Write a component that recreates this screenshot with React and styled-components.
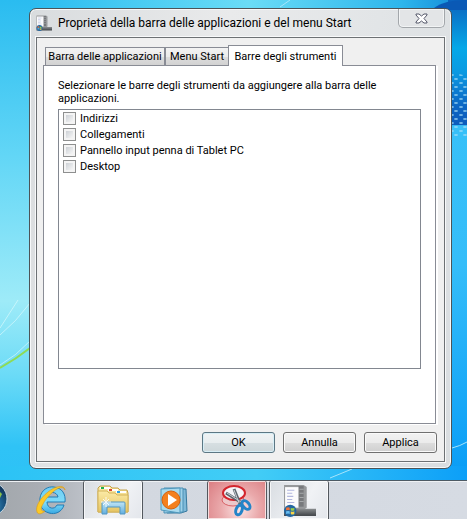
import React from 'react';
import styled, { createGlobalStyle } from 'styled-components';

const GlobalStyle = createGlobalStyle`
  * {
    box-sizing: border-box;
  }
  body {
    margin: 0;
    background: #35bdf2;
    font-family: Roboto, "Noto Sans", sans-serif;
    font-size: 11px;
    line-height: 13px;
    color: #000;
  }
  button {
    font: inherit;
    color: inherit;
  }
`;

const Screen = styled.div`
  position: relative;
  display: flex;
  flex-direction: column;
  min-height: 100vh;
  overflow: hidden;
`;

const WallpaperSvg = styled.svg`
  position: absolute;
  inset: 0;
  width: 100%;
  height: 100%;
  z-index: -1;
`;

const Desktop = styled.main`
  flex: 1;
  display: flex;
  padding: 8px 15px 11px 29px;
`;

const Window = styled.section`
  flex: 1;
  display: flex;
  flex-direction: column;
  min-width: 0;
  padding: 0 6px 6px;
  border: 1px solid #4c5458;
  border-radius: 7px;
  background: linear-gradient(100deg, #d9dcde 0, #e9eaeb 40%, #e2e5e7 70%, #d9dde0 100%);
  box-shadow: inset 0 0 0 1px #f6f8f9;
`;

const TitleBar = styled.header`
  display: flex;
  align-items: center;
  height: 28px;
  gap: 6px;
`;

const Title = styled.h1`
  flex: 1;
  margin: 0;
  font-size: 12px;
  font-weight: 400;
  line-height: 16px;
  white-space: nowrap;
`;

const CloseButton = styled.button`
  display: flex;
  align-items: center;
  justify-content: center;
  align-self: flex-start;
  width: 47px;
  height: 19px;
  padding: 0;
  border: 1px solid #a3a7ab;
  border-top: 0;
  border-radius: 0 0 5px 5px;
  background: #e3e5e7;
  box-shadow: inset 0 0 0 1px #f2f4f5;
`;

const Client = styled.div`
  flex: 1;
  display: flex;
  flex-direction: column;
  padding: 7px 8px 8px 6px;
  border: 1px solid #6d7174;
  background: #f0f0f0;
  box-shadow: 0 0 0 1px #f8f9fa;
`;

const TabList = styled.div`
  display: flex;
  align-items: flex-end;
  padding-left: 2px;
`;

const Tab = styled.button`
  position: relative;
  flex: none;
  width: ${(props) => props.$width}px;
  height: ${(props) => (props.$active ? 21 : 18)}px;
  margin: ${(props) => (props.$active ? '0 0 -1px -1px' : '0')};
  padding: 0;
  border: 1px solid #898c95;
  border-bottom: 0;
  background: ${(props) =>
    props.$active ? '#fff' : 'linear-gradient(#f3f3f3 0, #ebebeb 50%, #dddddd 51%, #d2d2d2 100%)'};
  white-space: nowrap;
`;

const Page = styled.div`
  flex: 1;
  display: flex;
  flex-direction: column;
  gap: 4px;
  padding: 13px 14px 54px;
  border: 1px solid #898c95;
  background: #fff;
  box-shadow: 2px 1px 0 #fff;
`;

const Intro = styled.p`
  margin: 0;
`;

const ToolbarList = styled.ul`
  flex: 1;
  margin: 0;
  padding: 2px 4px;
  border: 1px solid #828790;
  list-style: none;
`;

const ToolbarRow = styled.li`
  display: flex;
  gap: 4px;
  height: 16px;
  line-height: 14px;
`;

const CheckBox = styled.input`
  appearance: none;
  width: 13px;
  height: 13px;
  margin: 0;
  border: 1px solid #8e8f8f;
  background: linear-gradient(135deg, #cdd1d6, #f6f6f6) content-box, #f4f4f4;
  padding: 2px;
`;

const Footer = styled.footer`
  display: flex;
  justify-content: flex-end;
  gap: 8px;
  margin: 8px -1px 0 0;
`;

const PushButton = styled.button`
  width: 73px;
  height: 21px;
  padding: 0;
  border: 1px solid ${(props) => (props.$primary ? '#5c7784' : '#707070')};
  border-radius: 3px;
  background: ${(props) =>
    props.$primary
      ? 'linear-gradient(#f0f3f4 0, #e8edef 50%, #d7dfe2 51%, #cdd7da 100%)'
      : 'linear-gradient(#f2f2f2 0, #ebebeb 50%, #dddddd 51%, #cfcfcf 100%)'};
  box-shadow: inset 0 0 0 1px ${(props) => (props.$primary ? '#d8eef6' : '#fafafa')};
`;

const Taskbar = styled.nav`
  display: flex;
  gap: 2px;
  height: 39px;
  border-top: 1px solid #4d5a64;
  background: linear-gradient(90deg, #a3a8ad 0, #a9adb3 8%, #d3d8e0 30%, #d6dbe3 100%);
  box-shadow: inset 0 1px 0 #eef1f4;
`;

const StartButton = styled.button`
  width: 19px;
  padding: 0;
  border: 0;
  background: none;
`;

const taskFill = {
  idle: 'none',
  open: 'linear-gradient(120deg, #d9dde2, #f0f2f5 60%, #e3e6eb)',
  alert: 'radial-gradient(circle at 55% 75%, #fbe4e4 0, #eaa9ab 45%, #d97b80 100%)',
};

const TaskButton = styled.button`
  display: flex;
  align-items: flex-start;
  justify-content: center;
  width: 60px;
  padding: 3px 0 0;
  border: solid ${(props) => (props.$state === 'idle' ? 'transparent' : '#53585e')};
  border-width: 0 1px;
  border-radius: 2px 2px 0 0;
  background: ${(props) => taskFill[props.$state]};
  box-shadow: ${(props) => (props.$state === 'idle' ? 'none' : 'inset 0 0 0 1px rgba(255, 255, 255, 0.7)')};
`;

function Wallpaper() {
  return (
    <WallpaperSvg viewBox="0 0 467 519" preserveAspectRatio="none" aria-hidden="true">
      <defs>
        <linearGradient id="sky" x1="0" y1="0" x2="0" y2="1">
          <stop offset="0" stopColor="#2abcf0" />
          <stop offset="0.3" stopColor="#62d6f6" />
          <stop offset="0.58" stopColor="#9eebf8" />
          <stop offset="0.72" stopColor="#6cdbf7" />
          <stop offset="0.86" stopColor="#2fc3f6" />
          <stop offset="1" stopColor="#2cc0f5" />
        </linearGradient>
        <linearGradient id="topGlow" x1="0" y1="0" x2="1" y2="0">
          <stop offset="0" stopColor="#2abcf0" />
          <stop offset="0.5" stopColor="#6adcf6" />
          <stop offset="0.85" stopColor="#2eb6ec" />
          <stop offset="1" stopColor="#1187d6" />
        </linearGradient>
        <linearGradient id="east" x1="0" y1="0" x2="0" y2="1">
          <stop offset="0" stopColor="#0b62bd" />
          <stop offset="0.1" stopColor="#06a8e8" />
          <stop offset="0.15" stopColor="#0b9ae2" />
          <stop offset="0.22" stopColor="#0c66c4" />
          <stop offset="0.26" stopColor="#0c5bbb" />
          <stop offset="0.261" stopColor="#38c0f8" />
          <stop offset="0.55" stopColor="#35bdf9" />
          <stop offset="1" stopColor="#089cf6" />
        </linearGradient>
        <linearGradient id="floor" x1="0" y1="0" x2="1" y2="0">
          <stop offset="0" stopColor="#2cc3f5" />
          <stop offset="0.55" stopColor="#42cdf6" />
          <stop offset="1" stopColor="#0c9ff8" />
        </linearGradient>
        <pattern id="dots" width="9" height="8" patternUnits="userSpaceOnUse">
          <ellipse cx="2" cy="3" rx="2" ry="1" fill="#a5def8" />
          <ellipse cx="6" cy="7" rx="2" ry="1" fill="#a5def8" />
        </pattern>
      </defs>
      <rect width="467" height="519" fill="url(#sky)" />
      <rect x="30" width="437" height="12" fill="url(#topGlow)" />
      <rect x="448" width="19" height="481" fill="url(#east)" />
      <rect y="466" width="467" height="16" fill="url(#floor)" />
      <path d="M434 8Q444 0 467 0V10H434Z" fill="#0a59b5" />
      <path d="M452 72L467 76V138H452Z" fill="url(#dots)" opacity="0.7" />
      <path d="M0 368Q16 359 30 348" fill="none" stroke="#8edb55" strokeWidth="2" />
      <path d="M0 365Q16 356 30 341M0 335Q16 322 30 303M0 328L18 300" fill="none" stroke="#e4fbfd" opacity="0.6" />
      <path d="M280 7L290 0M452 448Q460 446 467 442M330 478L352 469" fill="none" stroke="#a6e4fb" />
    </WallpaperSvg>
  );
}

function FlagOrb() {
  return (
    <g>
      <circle cx="6" cy="6" r="6" fill="#2366a0" />
      <path d="M2 3Q4 2 5.500 3V5.500Q4 5 2 5.500Z" fill="#ee7138" />
      <path d="M6.500 3Q8 4 10 3V5.500Q8 6.500 6.500 5.500Z" fill="#9bce45" />
      <path d="M2 6.500Q4 6 5.500 6.500V9Q4 8 2 9Z" fill="#67bdf0" />
      <path d="M6.500 6.500Q8 7.500 10 6.500V9Q8 10 6.500 9Z" fill="#f8d347" />
    </g>
  );
}

function PanelIcon({ size }) {
  return (
    <svg width={size} height={size} viewBox="0 0 32 32" aria-hidden="true">
      <defs>
        <linearGradient id="bar" x1="0" y1="0" x2="0" y2="1">
          <stop offset="0" stopColor="#8a8d8f" />
          <stop offset="1" stopColor="#3f4347" />
        </linearGradient>
      </defs>
      <path d="M1 1H20L23 3V23L20 25H1Z" fill="#97999b" />
      <path d="M15 2H20V22H15Z" fill="#77797c" />
      <path d="M16 5H20M16 9H20M16 13H20M16 17H20" stroke="#a6a9ab" />
      <path d="M2 3H15V23H2Z" fill="#fbfbfc" />
      <path d="M4 6H11M4 9H9M4 12H10M4 15H9M4 18H11" stroke="#b3b8de" />
      <path d="M1 24H32V31H1Z" fill="url(#bar)" />
      <g transform="translate(1 20)">
        <FlagOrb />
      </g>
    </svg>
  );
}

function StartOrb() {
  return (
    <svg width="19" height="38" viewBox="0 0 19 38" aria-hidden="true">
      <defs>
        <radialGradient id="orb" cx="0.5" cy="0.7" r="0.6">
          <stop offset="0" stopColor="#4aa6cf" />
          <stop offset="0.6" stopColor="#1c5d8c" />
          <stop offset="1" stopColor="#12385c" />
        </radialGradient>
      </defs>
      <circle cx="-10" cy="18" r="17" fill="url(#orb)" stroke="#c5d5df" />
      <path d="M0 11L2 13L0 17Z" fill="#8ac24a" />
    </svg>
  );
}

function ExplorerIcon() {
  return (
    <svg width="32" height="32" viewBox="0 0 32 32" aria-hidden="true">
      <defs>
        <linearGradient id="ie" x1="0" y1="0" x2="0" y2="1">
          <stop offset="0" stopColor="#6fcdf3" />
          <stop offset="0.6" stopColor="#7fdcfa" />
          <stop offset="1" stopColor="#38a8e2" />
        </linearGradient>
      </defs>
      <path
        d="M30 18H12C12 25 20 26 22 21H29C27 28 20 31 14 29C7 27 4 21 5 14C6 6 13 2 19 3C27 4 31 10 30 18ZM12 13H23C22 7 13 7 12 13Z"
        fill="url(#ie)"
        stroke="#237cb4"
      />
      <path
        d="M30 6C29 0 20 2 13 8C5 14 0 23 2 28C3 31 7 30 10 27C6 28 5 25 8 20C11 14 17 8 22 5C26 3 29 3 30 6Z"
        fill="#fcc927"
        stroke="#dc9b14"
        strokeWidth="0.6"
      />
    </svg>
  );
}

function FolderIcon() {
  return (
    <svg width="34" height="32" viewBox="0 0 34 32" aria-hidden="true">
      <defs>
        <linearGradient id="folder" x1="0" y1="0" x2="0" y2="1">
          <stop offset="0" stopColor="#fbeaa6" />
          <stop offset="1" stopColor="#e6c564" />
        </linearGradient>
        <linearGradient id="stand" x1="0" y1="0" x2="0" y2="1">
          <stop offset="0" stopColor="#bfe5f6" />
          <stop offset="1" stopColor="#62aede" />
        </linearGradient>
      </defs>
      <path d="M2 4L4 2H14L16 4H22L24 6H31L32 9V28H2Z" fill="url(#folder)" stroke="#c3a14a" />
      <path d="M4 4H14M12 6H22M20 8H30" stroke="#fff" strokeWidth="2" />
      <path d="M5 4H8" stroke="#1fb14c" strokeWidth="2" />
      <path d="M13 6H16" stroke="#d8452b" strokeWidth="2" />
      <path d="M21 8H24" stroke="#2a9fe6" strokeWidth="2" />
      <path d="M2 7H11L13 9H19L21 11H32V28H2Z" fill="url(#folder)" stroke="#d4b45b" />
      <path d="M6 30V19Q6 18 7 18H28Q29 18 29 19V30H24V23H11V30Z" fill="url(#stand)" stroke="#5397c2" />
      <path d="M10 13V23M5 18H15M7 15L13 21M13 15L7 21" stroke="#fff" opacity="0.85" />
    </svg>
  );
}

function MediaIcon() {
  return (
    <svg width="32" height="32" viewBox="0 0 32 32" aria-hidden="true">
      <path d="M8 5L27 5L28 27L22 29H8Z" fill="#7fb9d8" stroke="#37799f" />
      <path d="M5 4L24 4V28L5 29Z" fill="#9fd2ea" stroke="#4a90b5" />
      <path d="M2 5L21 4V29L2 26Z" fill="#a9daee" stroke="#4f98bd" />
      <circle cx="12" cy="16" r="9" fill="#f4801f" stroke="#d5620e" />
      <path d="M9 10L18 16L9 22Z" fill="#fff" />
    </svg>
  );
}

function SnippingIcon() {
  return (
    <svg width="32" height="34" viewBox="0 0 32 34" aria-hidden="true">
      <ellipse cx="12" cy="16" rx="11" ry="6" fill="#edc7c9" stroke="#d86267" />
      <ellipse cx="13" cy="9" rx="11" ry="7" fill="#f4f5f8" stroke="#d3252d" strokeWidth="2" />
      <path d="M5 9L21 19M13 5L19 20" stroke="#5e666e" strokeWidth="3" />
      <path d="M6 9L20 18M13 6L18 19" stroke="#c9d0d5" />
      <ellipse cx="25" cy="21" rx="3" ry="5" transform="rotate(-40 25 21)" fill="none" stroke="#2484c8" strokeWidth="3" />
      <ellipse cx="18" cy="26" rx="3" ry="5" transform="rotate(20 18 26)" fill="none" stroke="#2484c8" strokeWidth="3" />
    </svg>
  );
}

const toolbars = ['Indirizzi', 'Collegamenti', 'Pannello input penna di Tablet PC', 'Desktop'];

const tabs = [
  { label: 'Barra delle applicazioni', width: 120 },
  { label: 'Menu Start', width: 64 },
  { label: 'Barre degli strumenti', width: 115, active: true },
];

const tasks = [
  { name: 'Internet Explorer', state: 'idle', icon: <ExplorerIcon /> },
  { name: 'Esplora risorse', state: 'open', icon: <FolderIcon /> },
  { name: 'Windows Media Player', state: 'idle', icon: <MediaIcon /> },
  { name: 'Strumento di cattura', state: 'alert', icon: <SnippingIcon /> },
  { name: 'Barra delle applicazioni', state: 'open', icon: <PanelIcon size={33} /> },
];

function App() {
  return (
    <Screen>
      <GlobalStyle />
      <Wallpaper />
      <Desktop>
        <Window>
          <TitleBar>
            <PanelIcon size={16} />
            <Title>Proprietà della barra delle applicazioni e del menu Start</Title>
            <CloseButton aria-label="Chiudi">
              <svg width="13" height="11" viewBox="0 0 13 11" aria-hidden="true">
                <path
                  d="M1 1H4L6.500 3L9 1H12V2L9 5.500L12 9V10H9L6.500 8L4 10H1V9L4 5.500L1 2Z"
                  fill="#fff"
                  stroke="#55586a"
                />
              </svg>
            </CloseButton>
          </TitleBar>
          <Client>
            <TabList role="tablist">
              {tabs.map((tab) => (
                <Tab key={tab.label} role="tab" aria-selected={!!tab.active} $active={tab.active} $width={tab.width}>
                  {tab.label}
                </Tab>
              ))}
            </TabList>
            <Page role="tabpanel">
              <Intro>Selezionare le barre degli strumenti da aggiungere alla barra delle applicazioni.</Intro>
              <ToolbarList>
                {toolbars.map((name, i) => (
                  <ToolbarRow key={name}>
                    <CheckBox type="checkbox" id={`toolbar-${i}`} />
                    <label htmlFor={`toolbar-${i}`}>{name}</label>
                  </ToolbarRow>
                ))}
              </ToolbarList>
            </Page>
            <Footer>
              <PushButton $primary>OK</PushButton>
              <PushButton>Annulla</PushButton>
              <PushButton>Applica</PushButton>
            </Footer>
          </Client>
        </Window>
      </Desktop>
      <Taskbar>
        <StartButton aria-label="Start">
          <StartOrb />
        </StartButton>
        {tasks.map((task) => (
          <TaskButton key={task.name} aria-label={task.name} $state={task.state}>
            {task.icon}
          </TaskButton>
        ))}
      </Taskbar>
    </Screen>
  );
}

export default App;
